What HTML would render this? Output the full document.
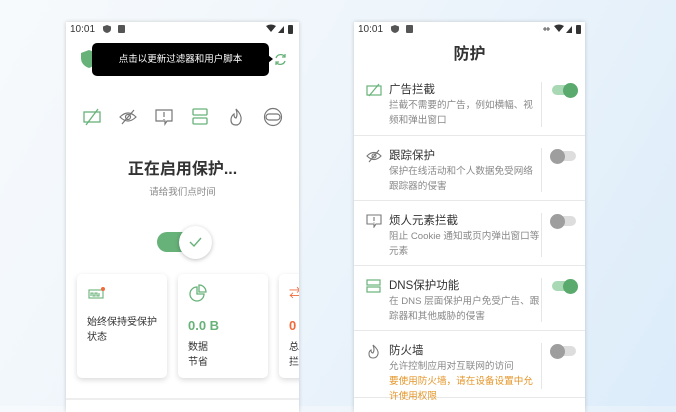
<!DOCTYPE html>
<html><head><meta charset="utf-8"><style>
*{margin:0;padding:0;box-sizing:border-box}
body{width:676px;height:406px;overflow:hidden;position:relative;font-family:"Liberation Sans","Noto Sans CJK SC",sans-serif;background:linear-gradient(120deg,#f7fafc 0%,#eef5fb 45%,#dcecfa 100%)}
.ph{position:absolute;top:22px;height:390px;background:#fff;box-shadow:0 0 4px rgba(0,0,0,.18);overflow:hidden}
.sb{position:absolute;top:0;left:0;right:0;height:14px;font-size:10px;color:#333}
.abs{position:absolute}
.card{position:absolute;top:252px;width:90px;height:104px;background:#fff;border-radius:5px;box-shadow:0 2px 6px rgba(0,0,0,.15)}
.row{position:absolute;left:0;right:0;border-bottom:1.5px solid #e8e8e8}
.row .t{position:absolute;left:35px;top:11px;font-size:11.5px;color:#333}
.row .d{position:absolute;left:35px;top:28px;white-space:nowrap;font-size:9.6px;line-height:15px;color:#888}
.row .v{position:absolute;left:187px;top:12px;bottom:8px;width:1px;background:#e6e6e6}
.row svg.i{position:absolute;left:12px;top:13px}
.tg{position:absolute;left:198px;top:15px;width:24px;height:10px;border-radius:5px}
.tg b{position:absolute;top:-2.5px;width:15px;height:15px;border-radius:50%}
.on{background:#a9d8b4}.on b{right:-2px;background:#5aaa6e}
.off{background:#ddd}.off b{left:-2px;background:#9e9e9e}
</style></head><body>

<!-- LEFT PHONE -->
<div class="ph" style="left:66px;width:233px">
 <div class="sb"><span class="abs" style="left:4px;top:2px">10:01</span>
  <svg class="abs" style="left:37px;top:3px" width="8" height="8"><path d="M4 0L8 1.5V4Q8 7 4 8Q0 7 0 4V1.5Z" fill="#555"/></svg>
  <svg class="abs" style="left:52px;top:3px" width="7" height="8"><rect width="7" height="8" rx="1" fill="#555"/></svg>
  <svg class="abs" style="left:200px;top:2px" width="30" height="10"><path d="M0 2Q5 -1 10 2L5 8Z" fill="#333"/><path d="M12 9L18 2V9Z" fill="#333"/><rect x="22" y="1" width="5" height="9" rx="1" fill="#333"/></svg>
 </div>
 <svg class="abs" style="left:15px;top:28px" width="16" height="18"><path d="M8 0L16 3V8Q16 15 8 18Q0 15 0 8V3Z" fill="#67b279"/></svg>
 <div class="abs" style="left:26px;top:21px;width:177px;height:33px;background:#000;border-radius:5px;color:#fff;font-size:9.5px;text-align:center;line-height:33px">点击以更新过滤器和用户脚本</div>
 <svg class="abs" style="left:202px;top:33px" width="5" height="8"><path d="M0 0L5 4L0 8Z" fill="#000"/></svg>
 <svg class="abs" style="left:208px;top:31px" width="13" height="13" fill="none" stroke="#67b279" stroke-width="1.3"><path d="M2 5A5 5 0 0 1 11 4M11 8A5 5 0 0 1 2 9"/><path d="M11 1V4H8M2 12V9H5"/></svg>
 <svg class="abs" style="left:17px;top:86px" width="18" height="18" fill="none" stroke="#67b279" stroke-width="1.3"><rect x="1" y="4" width="16" height="10"/><path d="M15 1L3 17"/></svg>
 <svg class="abs" style="left:53px;top:86px" width="18" height="18" fill="none" stroke="#777" stroke-width="1.2"><path d="M1 9Q9 1 17 9Q9 17 1 9Z"/><circle cx="9" cy="9" r="2.5"/><path d="M15 2L3 16"/></svg>
 <svg class="abs" style="left:89px;top:86px" width="18" height="18" fill="none" stroke="#777" stroke-width="1.2"><path d="M1 2H17V13H12L10 16V13H1Z"/><path d="M9 4V9M9 11V12"/></svg>
 <svg class="abs" style="left:126px;top:86px" width="16" height="18" fill="none" stroke="#67b279" stroke-width="1.3"><rect x="1" y="1" width="14" height="6" rx="1"/><rect x="1" y="10" width="14" height="6" rx="1"/></svg>
 <svg class="abs" style="left:162px;top:86px" width="16" height="18" fill="none" stroke="#777" stroke-width="1.2"><path d="M8 1Q14 7 13 12Q12 17 8 17Q3 17 3 12Q3 8 6 6Q6 10 8 10Q10 7 8 1Z"/></svg>
 <svg class="abs" style="left:197px;top:85px" width="20" height="20" fill="none" stroke="#777" stroke-width="1.2"><circle cx="10" cy="10" r="8.5"/><rect x="3" y="7" width="14" height="6" rx="3"/></svg>
 <div class="abs" style="left:0;width:233px;top:133px;text-align:center;font-size:16px;font-weight:bold;color:#333">正在启用保护...</div>
 <div class="abs" style="left:0;width:233px;top:162px;text-align:center;font-size:9.5px;color:#888">请给我们点时间</div>
 <div class="abs" style="left:91px;top:210px;width:36px;height:20px;border-radius:10px;background:#67b279"></div>
 <div class="abs" style="left:113px;top:204px;width:33px;height:33px;border-radius:50%;background:#fff;box-shadow:0 1px 4px rgba(0,0,0,.25)"></div>
 <svg class="abs" style="left:123px;top:215px" width="13" height="11" fill="none" stroke="#67b279" stroke-width="1.4"><path d="M1 5L5 9L12 1"/></svg>
 <div class="card" style="left:11px">
  <svg class="abs" style="left:11px;top:12px" width="18" height="14" fill="none" stroke="#67b279" stroke-width="1.1"><rect x="1" y="4" width="14" height="8"/><path d="M3 10V7H5V10H7V7H9V10H11V7"/><circle cx="15" cy="3" r="2" fill="#f06a3b" stroke="none"/></svg>
  <div class="abs" style="left:10px;top:41px;font-size:10px;line-height:15px;color:#333">始终保持受保护<br>状态</div>
 </div>
 <div class="card" style="left:112px">
  <svg class="abs" style="left:11px;top:10px" width="18" height="18" fill="none" stroke="#67b279" stroke-width="1.3"><path d="M8 3A7 7 0 1 0 15 10H8Z"/><path d="M10 1A7 7 0 0 1 17 8H10Z"/></svg>
  <div class="abs" style="left:10px;top:44px;font-size:13px;font-weight:bold;color:#67b279">0.0 B</div>
  <div class="abs" style="left:10px;top:66px;font-size:10px;line-height:15px;color:#333">数据<br>节省</div>
 </div>
 <div class="card" style="left:213px">
  <div class="abs" style="left:10px;top:10px;color:#f06a3b;font-size:12px">⇄</div>
  <div class="abs" style="left:10px;top:44px;font-size:13px;font-weight:bold;color:#f06a3b">0</div>
  <div class="abs" style="left:10px;top:66px;font-size:10px;line-height:15px;color:#333">总<br>拦</div>
 </div>
 <div class="abs" style="left:0;right:0;top:376px;height:2px;background:#eee"></div>
</div>

<!-- RIGHT PHONE -->
<div class="ph" style="left:354px;width:231px">
 <div class="sb"><span class="abs" style="left:4px;top:2px">10:01</span>
  <svg class="abs" style="left:37px;top:3px" width="8" height="8"><path d="M4 0L8 1.5V4Q8 7 4 8Q0 7 0 4V1.5Z" fill="#555"/></svg>
  <svg class="abs" style="left:52px;top:3px" width="7" height="8"><rect width="7" height="8" rx="1" fill="#555"/></svg>
  <svg class="abs" style="left:188px;top:2px" width="42" height="10"><path d="M1 5H8M3 3V7M6 3V7" stroke="#555" fill="none"/><path d="M12 2Q17 -1 22 2L17 8Z" fill="#333"/><path d="M24 9L30 2V9Z" fill="#333"/><rect x="34" y="1" width="5" height="9" rx="1" fill="#333"/></svg>
 </div>
 <div class="abs" style="left:0;width:231px;top:18px;text-align:center;font-size:16px;font-weight:bold;color:#333">防护</div>
 <div class="row" style="top:48px;height:66px">
  <svg class="i" width="16" height="14" fill="none" stroke="#67b279" stroke-width="1.2"><rect x="1" y="3" width="14" height="9"/><path d="M13 1L3 13"/></svg>
  <div class="t">广告拦截</div><div class="d">拦截不需要的广告，例如横幅、视<br>频和弹出窗口</div><div class="v"></div><div class="tg on"><b></b></div></div>
 <div class="row" style="top:114px;height:65px">
  <svg class="i" width="16" height="14" fill="none" stroke="#777" stroke-width="1.1"><path d="M1 7Q8 0 15 7Q8 14 1 7Z"/><circle cx="8" cy="7" r="2"/><path d="M13 1L3 13"/></svg>
  <div class="t">跟踪保护</div><div class="d">保护在线活动和个人数据免受网络<br>跟踪器的侵害</div><div class="v"></div><div class="tg off"><b></b></div></div>
 <div class="row" style="top:179px;height:65px">
  <svg class="i" width="16" height="14" fill="none" stroke="#777" stroke-width="1.1"><path d="M1 1H15V10H10L8 13V10H1Z"/><path d="M8 3V7M8 8.5V9"/></svg>
  <div class="t">烦人元素拦截</div><div class="d">阻止 Cookie 通知或页内弹出窗口等<br>元素</div><div class="v"></div><div class="tg off"><b></b></div></div>
 <div class="row" style="top:244px;height:65px">
  <svg class="i" width="16" height="14" fill="none" stroke="#67b279" stroke-width="1.2"><rect x="1" y="1" width="13" height="5"/><rect x="1" y="8" width="13" height="5"/></svg>
  <div class="t">DNS保护功能</div><div class="d">在 DNS 层面保护用户免受广告、跟<br>踪器和其他威胁的侵害</div><div class="v"></div><div class="tg on"><b></b></div></div>
 <div class="row" style="top:309px;height:67px">
  <svg class="i" width="16" height="16" fill="none" stroke="#777" stroke-width="1.1"><path d="M7 1Q13 6 12 10Q11 14 7 14Q3 14 3 10Q3 7 5 6Q5 9 7 9Q9 6 7 1Z"/></svg>
  <div class="t">防火墙</div><div class="d">允许控制应用对互联网的访问<br><span style="color:#e4962a">要使用防火墙，请在设备设置中允<br>许使用权限</span></div><div class="v"></div><div class="tg off"><b></b></div></div>
</div>
</body></html>
